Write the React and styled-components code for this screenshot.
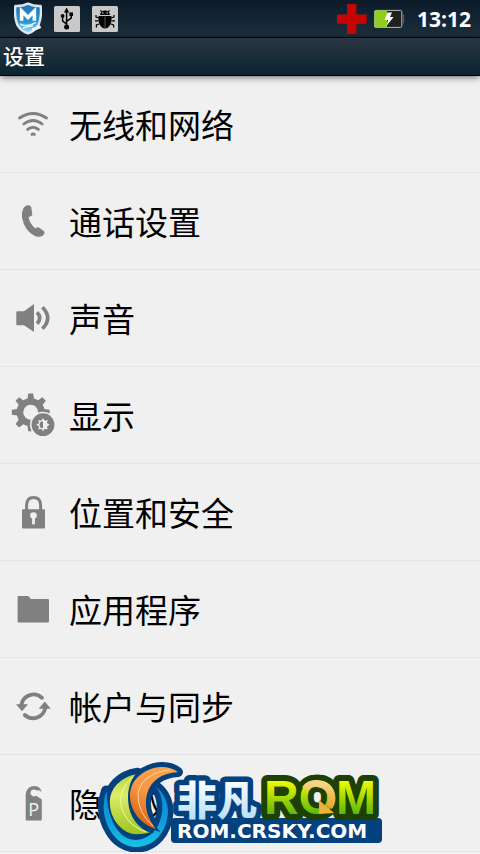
import React from "react";
import styled, { createGlobalStyle } from "styled-components";

const GlobalStyle = createGlobalStyle`
  body {
    margin: 0;
    background-color: #f0f0f0;
    font-family: "Noto Sans", "Noto Sans CJK SC", sans-serif;
  }
`;

const Screen = styled.div`
  position: relative;
`;

const StatusBar = styled.div`
  display: flex;
  justify-content: space-between;
  align-items: center;
  box-sizing: border-box;
  height: 38px;
  padding: 0 9px 0 14px;
  background: linear-gradient(#0b1b29, #1c2f3b);
  border-bottom: 1px solid #000;
`;

const StatusGroup = styled.div`
  display: flex;
  align-items: center;
  gap: ${(props) => props.$gap};
`;

const Clock = styled.time`
  margin-left: 6px;
  color: #fff;
  font-family: "Open Sans", sans-serif;
  font-size: 21px;
  font-weight: bold;
  line-height: 24px;
`;

const TitleBar = styled.header`
  display: flex;
  align-items: center;
  box-sizing: border-box;
  height: 38px;
  padding: 0 3px 3px;
  background: linear-gradient(#2a3541, #0b2431);
  border-bottom: 1px solid #000;
  box-shadow: 0 1px 7px rgba(0, 0, 0, 0.6);
`;

const Title = styled.h1`
  margin: 0;
  color: #fff;
  font-family: "Noto Sans CJK SC", sans-serif;
  font-size: 21px;
  font-weight: 500;
  line-height: 24px;
`;

const List = styled.ul`
  list-style-type: none;
  margin: 0;
  padding: 0;
`;

const ListItem = styled.li`
  border-bottom: 1px solid #e4e4e4;
`;

const RowButton = styled.button`
  display: flex;
  align-items: center;
  gap: 12px;
  width: 100%;
  height: 96px;
  padding: 0 9px;
  border: 0;
  background: none;
  color: #000;
  font-family: "Noto Sans CJK SC", sans-serif;
  font-size: 33px;
  line-height: 48px;
  text-align: left;
`;

const RowIcon = styled.svg`
  flex: none;
  width: 48px;
  height: 48px;
  fill: #808080;
`;

const Watermark = styled.svg`
  position: absolute;
  left: 96px;
  bottom: -2px;
  width: 290px;
  height: 94px;
  pointer-events: none;
`;

const Wordmark = styled.text`
  paint-order: stroke;
  stroke-linejoin: round;
`;

const ChineseName = styled(Wordmark)`
  fill: url(#name);
  stroke: #04417f;
  stroke-width: 11px;
  font-family: "Noto Sans CJK SC", sans-serif;
  font-size: 40px;
  font-style: oblique 10deg;
  font-weight: 900;
`;

const RomName = styled(Wordmark)`
  fill: url(#rom);
  stroke: #1e4003;
  stroke-width: 12px;
  font-family: "Liberation Sans", sans-serif;
  font-size: 48px;
  font-weight: bold;
`;

const Domain = styled.text`
  fill: #fff;
  font-family: "DejaVu Sans", sans-serif;
  font-size: 20px;
  font-weight: bold;
`;

const line = { fill: "none", stroke: "#808080" };
const teeth = [0, 45, 90, 135, 180, 225, 270, 315];

const icons = {
  wifi: (
    <g {...line} strokeWidth="2.8" strokeLinecap="round">
      <path d="M10.5 18Q24 9 37.5 18" />
      <path d="M14.8 24Q24 17 33.2 24" />
      <path d="M18.6 29.4Q24 25 29.4 29.4" />
      <path d="M23 34.4Q24.2 33.6 25.4 34.4" />
    </g>
  ),
  phone: (
    <path d="M17.5 8.4Q21.5 7.6 22.2 10L23.3 17.2Q23.2 19.3 19.6 20Q20.2 26 26.4 31.6Q28.8 29.4 30.6 31L35 34.3Q36.6 36 33.6 38.8Q31 40.8 26 39Q15.5 34 13 20.5Q12.2 10.2 17.5 8.4Z" />
  ),
  sound: (
    <g>
      <path d="M8.3 17.3H15L25 10V38L15 31.3H8.3Q7.3 31.3 7.3 30.3V18.3Q7.3 17.3 8.3 17.3Z" />
      <path {...line} strokeWidth="3.6" d="M28 18.2Q33.4 24 28 29.8" />
      <path {...line} strokeWidth="3.6" d="M33.4 13.2Q44 24 33.4 34.8" />
    </g>
  ),
  display: (
    <g>
      {teeth.map((angle) => (
        <path
          key={angle}
          d="M19.2 2.4H24.2L25.2 10H18.2Z"
          transform={`rotate(${angle} 21.7 21.3)`}
        />
      ))}
      <circle {...line} strokeWidth="6.6" cx="21.7" cy="21.3" r="10.8" />
      <circle cx="34" cy="33.7" r="13" fill="#f0f0f0" />
      <circle cx="34" cy="33.7" r="11.4" />
      {teeth.map((angle) => (
        <path
          key={angle}
          fill="#f0f0f0"
          d="M34 27L36.2 31H31.8Z"
          transform={`rotate(${angle} 34 33.7)`}
        />
      ))}
      <circle cx="34" cy="33.7" r="4.6" fill="#f0f0f0" />
      <path d="M34 30.2A3.5 3.5 0 0 0 34 37.2Z" />
    </g>
  ),
  lock: (
    <g>
      <path {...line} strokeWidth="3" d="M17.6 22V17Q17.8 9.5 24.5 9.5Q31.4 9.5 31.6 17V22" />
      <rect x="13" y="21.2" width="23" height="19.2" rx="1" />
      <circle cx="24.5" cy="27.6" r="3.3" fill="#f0f0f0" />
      <path d="M23.1 28H25.9V36.4H23.1Z" fill="#f0f0f0" />
    </g>
  ),
  folder: (
    <path d="M9.6 11H18.5Q20.5 11 21.6 14H39Q40 14 40 15V36.4Q40 37.4 39 37.4H9.6Q8.6 37.4 8.6 36.4V12Q8.6 11 9.6 11Z" />
  ),
  sync: (
    <g>
      <g {...line} strokeWidth="3.8" strokeLinecap="round">
        <path d="M12.4 22.6A12.4 12.4 0 0 1 33 15.8" />
        <path d="M36.2 26.4A12.4 12.4 0 0 1 15.8 33" />
      </g>
      <path d="M7 22.3H19L13 29.2Z" />
      <path d="M29.6 26.8H41.8L35.8 19.6Z" />
    </g>
  ),
  privacy: (
    <g>
      <path
        fillRule="evenodd"
        d="M16.7 40.6V15.5Q17.6 7 25.6 7Q31.8 7.6 32.5 13.2Q30.6 10.4 27.8 11.4Q25.4 9.9 23 11Q20.6 12.8 21.8 15.6Q23.8 18.4 27.4 16.8L32.8 20.4V40.6Q32.8 41.6 31.8 41.6H17.7Q16.7 41.6 16.7 40.6Z"
      />
      <text
        x="24.8"
        y="37"
        fill="#f0f0f0"
        fontFamily="Noto Sans, sans-serif"
        fontSize="18"
        textAnchor="middle"
      >
        P
      </text>
    </g>
  ),
};

const settings = [
  { icon: "wifi", label: "无线和网络" },
  { icon: "phone", label: "通话设置" },
  { icon: "sound", label: "声音" },
  { icon: "display", label: "显示" },
  { icon: "lock", label: "位置和安全" },
  { icon: "folder", label: "应用程序" },
  { icon: "sync", label: "帐户与同步" },
  { icon: "privacy", label: "隐私权" },
];

const ShieldIcon = () => (
  <svg width="28" height="33" viewBox="0 0 28 33">
    <defs>
      <linearGradient id="shield" x1="0" y1="0" x2="0" y2="1">
        <stop offset="0" stopColor="#1f74b8" />
        <stop offset="0.6" stopColor="#2c92d2" />
        <stop offset="1" stopColor="#a8e0f6" />
      </linearGradient>
    </defs>
    <path
      fill="url(#shield)"
      stroke="#dde6ea"
      strokeWidth="2.4"
      strokeLinejoin="round"
      d="M14 1.6Q20 4.4 26.6 4Q28 15 24.5 23Q20.5 29.4 14 31.4Q7.5 29.4 3.4 23Q0 15 1.4 4Q8 4.4 14 1.6Z"
    />
    <path
      fill="none"
      stroke="#fff"
      strokeWidth="3.6"
      d="M7.6 18.8V9L14 15.4L20.4 9V18.8"
    />
    <path fill="none" stroke="#d8f2fc" strokeWidth="1.6" d="M6 22Q13 26 22 20.4M9 26L19 23.4" />
    <path fill="none" stroke="#eef8fb" strokeWidth="3" d="M18 28L26.6 24.6" />
  </svg>
);

const UsbIcon = () => (
  <svg width="26" height="26" viewBox="0 0 26 26">
    <rect width="26" height="26" rx="1.5" fill="#c9c9c9" />
    <path d="M12.6 1.6L15.2 6.4H10Z" />
    <circle cx="12.6" cy="21" r="2.5" />
    <path
      fill="none"
      stroke="#000"
      strokeWidth="1.5"
      d="M12.6 5V20M12.6 18.2L8.6 14.8V10M12.6 15.4L17.2 12.2V8.6"
    />
    <circle cx="8.6" cy="9.8" r="1.9" />
    <path d="M15.4 6.4H19V10H15.4Z" />
  </svg>
);

const BugIcon = () => (
  <svg width="26" height="26" viewBox="0 0 26 26">
    <rect width="26" height="26" rx="1.5" fill="#c9c9c9" />
    <path
      fill="none"
      stroke="#000"
      strokeWidth="1.2"
      d="M9.6 6L8.6 4.2M16.4 6L17.4 4.2M7 12L4 11V9M19 12L22 11V9M6 14.8H3M20 14.8H23M7 18L4.4 19V21.4M19 18L21.6 19V21.4"
    />
    <path d="M8 9Q8.8 4.6 13 4.6Q17.2 4.6 18 9Z" />
    <path d="M6.6 10H19.4Q20.4 15 18.2 19Q16 22.4 13 22.6Q10 22.4 7.8 19Q5.6 15 6.6 10Z" />
    <path stroke="#777" strokeWidth="0.7" d="M13 10.4V22.4" />
    <circle cx="10.8" cy="7" r="0.8" fill="#c9c9c9" />
    <circle cx="15.2" cy="7" r="0.8" fill="#c9c9c9" />
  </svg>
);

const CrossIcon = () => (
  <svg width="32" height="32" viewBox="0 0 32 32">
    <path fill="#c60404" d="M11 1H20.4V11.4H30.6V20.8H20.4V31H11V20.8H1V11.4H11Z" />
  </svg>
);

const BatteryIcon = () => (
  <svg width="31" height="20" viewBox="0 0 31 20">
    <rect x="0.6" y="1.4" width="27.2" height="17" rx="1.4" fill="#20211f" stroke="#b5bab5" />
    <path fill="#8fce20" d="M0.6 1.4H13V18.4H0.6Z" />
    <path fill="#5d5553" d="M28.3 5.4H30.2V14.4H28.3Z" />
    <path fill="#fff" d="M13.4 3.4H18L16 8H19.6L12.4 17L14 11H10.6Z" />
  </svg>
);

const ringPath =
  "M10.5 31C5 46 8 60 14 70C20 81 30 87 40 87C58 87 71 72 72 52C72 41 67 32 60 27C65 34 67 42 66 52C64 68 54 79 40 80C26 80 12 66 10.5 31Z";
const greenPath =
  "M41.7 13.3C24 16 13 28 13 42C13 60 26 75 41 75Q50 75 56 72.5C42 68 34 56 33 42C32 30 35 20 41.7 13.3Z";
const orangePath =
  "M82 12C75 7 66 6 58 8C44 12 34 22 34 36C34 50 44 64 60 69C51 58 48 46 51 34C55 20 66 13 82 12Z";

const SiteLogo = () => (
  <Watermark viewBox="0 0 290 94">
    <defs>
      <linearGradient id="green" x1="0" y1="0" x2="0" y2="1">
        <stop offset="0" stopColor="#b9d63a" />
        <stop offset="0.35" stopColor="#dcec6c" />
        <stop offset="1" stopColor="#9cc41a" />
      </linearGradient>
      <linearGradient id="orange" x1="0.8" y1="0" x2="0.3" y2="1">
        <stop offset="0" stopColor="#f9a44e" />
        <stop offset="0.5" stopColor="#f79845" />
        <stop offset="1" stopColor="#d9600f" />
      </linearGradient>
      <linearGradient id="ring" x1="0" y1="0" x2="0" y2="1">
        <stop offset="0" stopColor="#0f86cc" />
        <stop offset="0.6" stopColor="#0f9edb" />
        <stop offset="1" stopColor="#18c5e4" />
      </linearGradient>
      <linearGradient id="rom" x1="0" y1="0" x2="0" y2="1">
        <stop offset="0.2" stopColor="#eefa00" />
        <stop offset="0.8" stopColor="#5fb80c" />
      </linearGradient>
      <linearGradient id="gold" x1="0" y1="0" x2="0" y2="1">
        <stop offset="0" stopColor="#f6d488" />
        <stop offset="1" stopColor="#eda52c" />
      </linearGradient>
      <linearGradient id="name" x1="0" y1="0" x2="0" y2="1">
        <stop offset="0.2" stopColor="#fff" />
        <stop offset="0.9" stopColor="#b4dcf6" />
      </linearGradient>
    </defs>

    {/* swirl */}
    <g fill="#04417f" stroke="#04417f" strokeLinejoin="round">
      <path strokeWidth="11" d={ringPath} />
      <path strokeWidth="11" d={greenPath} />
      <path strokeWidth="10" d={orangePath} />
    </g>
    <path fill="url(#ring)" d={ringPath} />
    <path fill="url(#green)" stroke="#04417f" strokeWidth="1.5" d={greenPath} />
    <path fill="none" stroke="#f0f8a8" strokeWidth="1" d="M37 17C24 28 22 42 28 54Q35 67 50 72" />
    <path fill="url(#orange)" stroke="#04417f" strokeWidth="3" paintOrder="stroke" d={orangePath} />
    <path fill="none" stroke="#ffd3a0" strokeWidth="1" d="M74 10C54 12 43 22 42 35Q42 53 57 66" />

    {/* wordmark */}
    <rect x="75" y="58" width="211" height="25" rx="4" fill="#04417f" />
    <ChineseName x="81" y="55">
      非凡
    </ChineseName>
    <RomName x="168" y="54">
      ROM
    </RomName>
    <path
      fill="none"
      stroke="url(#gold)"
      strokeWidth="7"
      d="M209 29Q213 23 221 23.5Q235 25 236 38Q236 43 233 47"
    />
    <path fill="#f0ae3c" d="M223 40L238 53L223 54Z" />
    <Domain x="81" y="78">
      ROM.CRSKY.COM
    </Domain>
  </Watermark>
);

const App = () => {
  return (
    <Screen>
      <GlobalStyle />
      <StatusBar>
        <StatusGroup $gap="12px">
          <ShieldIcon />
          <UsbIcon />
          <BugIcon />
        </StatusGroup>
        <StatusGroup $gap="6px">
          <CrossIcon />
          <BatteryIcon />
          <Clock>13:12</Clock>
        </StatusGroup>
      </StatusBar>
      <TitleBar>
        <Title>设置</Title>
      </TitleBar>
      <List>
        {settings.map((item) => (
          <ListItem key={item.icon}>
            <RowButton type="button">
              <RowIcon viewBox="0 0 48 48">{icons[item.icon]}</RowIcon>
              {item.label}
            </RowButton>
          </ListItem>
        ))}
      </List>
      <SiteLogo />
    </Screen>
  );
};

export default App;
